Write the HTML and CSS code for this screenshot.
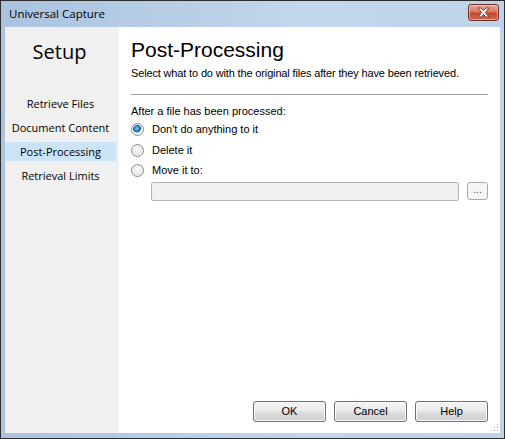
FILE: index.html
```html
<!DOCTYPE html>
<html>
<head>
<meta charset="utf-8">
<link rel="stylesheet" href="styles.css">
</head>
<body>
<div class="window">
  <div class="titlebar">
    <span class="title">Universal Capture</span>
    <button class="close" aria-label="Close">
      <svg width="15" height="11" viewBox="0 0 15 11">
        <path d="M2 1 L5 1 L7.5 3.6 L10 1 L13 1 L9.2 5.5 L13 10 L10 10 L7.5 7.4 L5 10 L2 10 L5.8 5.5 Z" fill="#fff" stroke="#5a2a20" stroke-width="0.8" stroke-linejoin="round"/>
      </svg>
    </button>
  </div>
  <div class="client">
    <nav class="sidebar">
      <div class="setup">Setup</div>
      <ul class="menu">
        <li class="item">Retrieve Files</li>
        <li class="item">Document Content</li>
        <li class="item active">Post-Processing</li>
        <li class="item">Retrieval Limits</li>
      </ul>
    </nav>
    <main class="panel">
      <h1 class="heading">Post-Processing</h1>
      <p class="desc">Select what to do with the original files after they have been retrieved.</p>
      <div class="sep"></div>
      <p class="label">After a file has been processed:</p>
      <div class="radios">
        <div class="radio-row"><span class="radio checked"></span><span>Don't do anything to it</span></div>
        <div class="radio-row"><span class="radio"></span><span>Delete it</span></div>
        <div class="radio-row"><span class="radio"></span><span>Move it to:</span></div>
      </div>
      <div class="path-row">
        <div class="field"></div>
        <div class="browse">...</div>
      </div>
      <div class="spacer"></div>
      <div class="buttons">
        <div class="btn">OK</div>
        <div class="btn">Cancel</div>
        <div class="btn">Help</div>
      </div>
      <div class="grip"></div>
    </main>
  </div>
</div>
</body>
</html>
```

FILE: styles.css
```css
html, body {
  margin: 0;
  padding: 0;
  background: #fff;
}

.window {
  width: 505px;
  height: 439px;
  box-sizing: border-box;
  border: 1px solid #2d2d2d;
  background: linear-gradient(to right, #aac3df, #c2d6ec 60%, #bed3ea);
  padding: 0 4px 5px 4px;
  display: flex;
  flex-direction: column;
}

.titlebar {
  height: 26px;
  display: flex;
  align-items: center;
  justify-content: space-between;
  padding: 0 1px 0 4px;
}

.title {
  font-family: "Open Sans", "Noto Sans", sans-serif;
  font-size: 11.5px;
  color: #000;
  margin-top: -2px;
}

.close {
  width: 31px;
  height: 17px;
  margin-top: -4px;
  border: 1px solid #6a3029;
  border-radius: 3px;
  background: linear-gradient(to bottom, #e6a89b 0%, #d9775f 45%, #c5472c 55%, #cf6a4f 100%);
  box-shadow: inset 0 0 0 1px rgba(255, 220, 210, 0.5);
  padding: 0;
  display: flex;
  align-items: center;
  justify-content: center;
}

.client {
  flex: 1;
  display: flex;
  background: #fff;
  min-height: 0;
}

.sidebar {
  width: 114px;
  background: #f0f0f0;
  display: flex;
  flex-direction: column;
  align-items: stretch;
}

.setup {
  font-family: "Open Sans", "Noto Sans", sans-serif;
  font-size: 20px;
  line-height: 28px;
  text-align: center;
  margin-top: 11px;
  padding-right: 5px;
  color: #000;
}

.menu {
  list-style: none;
  margin: 28px 0 0 0;
  padding: 0;
  display: flex;
  flex-direction: column;
  gap: 5px;
}

.item {
  height: 19px;
  line-height: 19px;
  width: 111px;
  text-align: center;
  font-family: "Open Sans", "Noto Sans", sans-serif;
  font-size: 11px;
  color: #000;
  white-space: nowrap;
}

.item.active {
  background: #cce4f7;
}

.panel {
  flex: 1;
  position: relative;
  display: flex;
  flex-direction: column;
  padding: 11px 12px 11px 12px;
  font-family: "Liberation Sans", Arial, sans-serif;
  font-size: 11px;
  color: #000;
}

.heading {
  margin: 0;
  font-family: "Liberation Sans", Arial, sans-serif;
  font-weight: normal;
  font-size: 21px;
  line-height: 24px;
}

.desc {
  margin: 4px 0 0 0;
  line-height: 14px;
  letter-spacing: -0.15px;
}

.sep {
  height: 1px;
  background: #a0a0a0;
  margin-top: 14px;
}

.label {
  margin: 9px 0 0 0;
  line-height: 14px;
}

.radios {
  display: flex;
  flex-direction: column;
  gap: 7.5px;
  margin-top: 5px;
}

.radio-row {
  display: flex;
  align-items: center;
  gap: 8px;
  height: 13px;
  line-height: 13px;
}

.radio {
  width: 11px;
  height: 11px;
  border-radius: 50%;
  border: 1px solid #8a8a8a;
  background: radial-gradient(circle at 50% 40%, #fdfdfd 0%, #e6e6e6 55%, #cfcfcf 100%);
  box-shadow: inset 0 0 0 1px #f4f4f4;
}

.radio.checked {
  background: radial-gradient(circle at 45% 40%, #8ad0f5 0%, #2b8fd3 25%, #14528c 40%, #e9e9e9 48%, #f7f7f7 70%, #d8d8d8 100%);
}

.path-row {
  display: flex;
  align-items: flex-start;
  gap: 8px;
  margin-top: 5px;
  padding-left: 20px;
}

.field {
  flex: 1;
  height: 17px;
  border: 1px solid #b5b5b5;
  border-radius: 2px;
  background: #f0f0f0;
}

.browse {
  width: 19px;
  height: 16px;
  border: 1px solid #a9a9a9;
  border-radius: 3px;
  background: #f6f6f6;
  font-size: 10px;
  line-height: 14px;
  text-align: center;
  color: #444;
}

.spacer {
  flex: 1;
}

.buttons {
  display: flex;
  justify-content: flex-end;
  gap: 8px;
}

.btn {
  width: 71px;
  height: 19px;
  border: 1px solid #707070;
  border-radius: 3px;
  background: linear-gradient(to bottom, #f3f3f3 0%, #ebebeb 48%, #dddddd 52%, #cfcfcf 100%);
  box-shadow: inset 0 0 0 1px #fbfbfb;
  font-size: 11px;
  line-height: 19px;
  text-align: center;
}

.grip {
  position: absolute;
  right: 2px;
  bottom: 2px;
  width: 8px;
  height: 8px;
  background-image: radial-gradient(circle, #b0b0b0 0.8px, transparent 1px);
  background-size: 3px 3px;
  clip-path: polygon(100% 0, 100% 100%, 0 100%);
}
```
